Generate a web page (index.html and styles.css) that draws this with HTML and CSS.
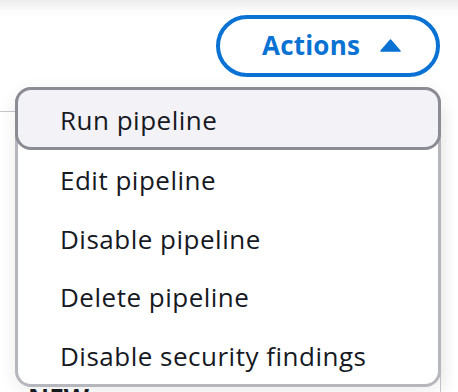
FILE: index.html
```html
<!DOCTYPE html>
<html lang="en">
<head>
<meta charset="utf-8">
<title>Actions menu</title>
<link rel="stylesheet" href="styles.css">
</head>
<body>
<div class="page">
  <div class="toolbar">
    <button class="actions-btn" type="button">
      <span class="actions-label">Actions</span>
      <svg class="caret" width="21" height="13" viewBox="0 0 21 13" aria-hidden="true">
        <path d="M10.5 1 L20 12 L1 12 Z" fill="#0972d3" stroke="#0972d3" stroke-width="1.5" stroke-linejoin="round"/>
      </svg>
    </button>
  </div>
  <div class="panel">
    <div class="panel-heading">NEW</div>
  </div>
  <ul class="menu">
    <li class="menu-item is-highlighted">Run pipeline</li>
    <li class="menu-item">Edit pipeline</li>
    <li class="menu-item">Disable pipeline</li>
    <li class="menu-item">Delete pipeline</li>
    <li class="menu-item">Disable security findings</li>
  </ul>
</div>
</body>
</html>
```
FILE: styles.css
```css
html, body {
  margin: 0;
  padding: 0;
}
body {
  width: 458px;
  height: 392px;
  overflow: hidden;
  background: linear-gradient(to bottom, #ececec 0px, #fafafa 10px, #ffffff 16px);
  font-family: "Open Sans", "Noto Sans", sans-serif;
  color: #16191f;
}
.page {
  position: relative;
  height: 392px;
  overflow: hidden;
}
.toolbar {
  display: flex;
  justify-content: flex-end;
  padding: 15px 18px 0 0;
}
.actions-btn {
  display: flex;
  align-items: center;
  gap: 20px;
  box-sizing: border-box;
  width: 224px;
  height: 62px;
  padding: 0 0 0 42px;
  border: 4px solid #0972d3;
  border-radius: 31px;
  background: #ffffff;
  color: #0972d3;
  font-family: inherit;
  font-size: 26px;
  font-weight: 700;
  letter-spacing: 0.2px;
  cursor: pointer;
}
.actions-label {
  line-height: 1;
  margin-top: -2px;
}
.caret {
  display: block;
  margin-top: -2px;
}
.panel {
  margin-top: 34px;
  box-sizing: border-box;
  width: 441px;
  height: 281px;
  overflow: hidden;
  border-top: 1px solid #c6c6cd;
  border-right: 1px solid #c6c6cd;
  background: #ffffff;
  box-shadow: 8px 0 10px rgba(0, 0, 0, 0.03);
  padding: 273px 0 0 28px;
}
.panel-heading {
  font-size: 26px;
  font-weight: 700;
  line-height: 1;
}
.menu {
  position: absolute;
  top: 87px;
  left: 15px;
  width: 426px;
  box-sizing: border-box;
  margin: 0;
  padding: 0;
  list-style: none;
  background: #ffffff;
  border: 3px solid #b6b6bd;
  border-top: none;
  border-radius: 16px;
  box-shadow: 0 4px 18px rgba(0, 0, 0, 0.08);
}
.menu-item {
  display: flex;
  align-items: center;
  height: 58.5px;
  padding-left: 42px;
  padding-top: 2px;
  box-sizing: border-box;
  font-size: 26px;
  font-weight: 500;
  letter-spacing: 0.5px;
  line-height: 1;
}
.menu-item.is-highlighted {
  height: 63px;
  margin: 0 -3px;
  padding-left: 42px;
  background: #f2f2f7;
  border: 3px solid #8c8c94;
  border-radius: 16px;
}
```
